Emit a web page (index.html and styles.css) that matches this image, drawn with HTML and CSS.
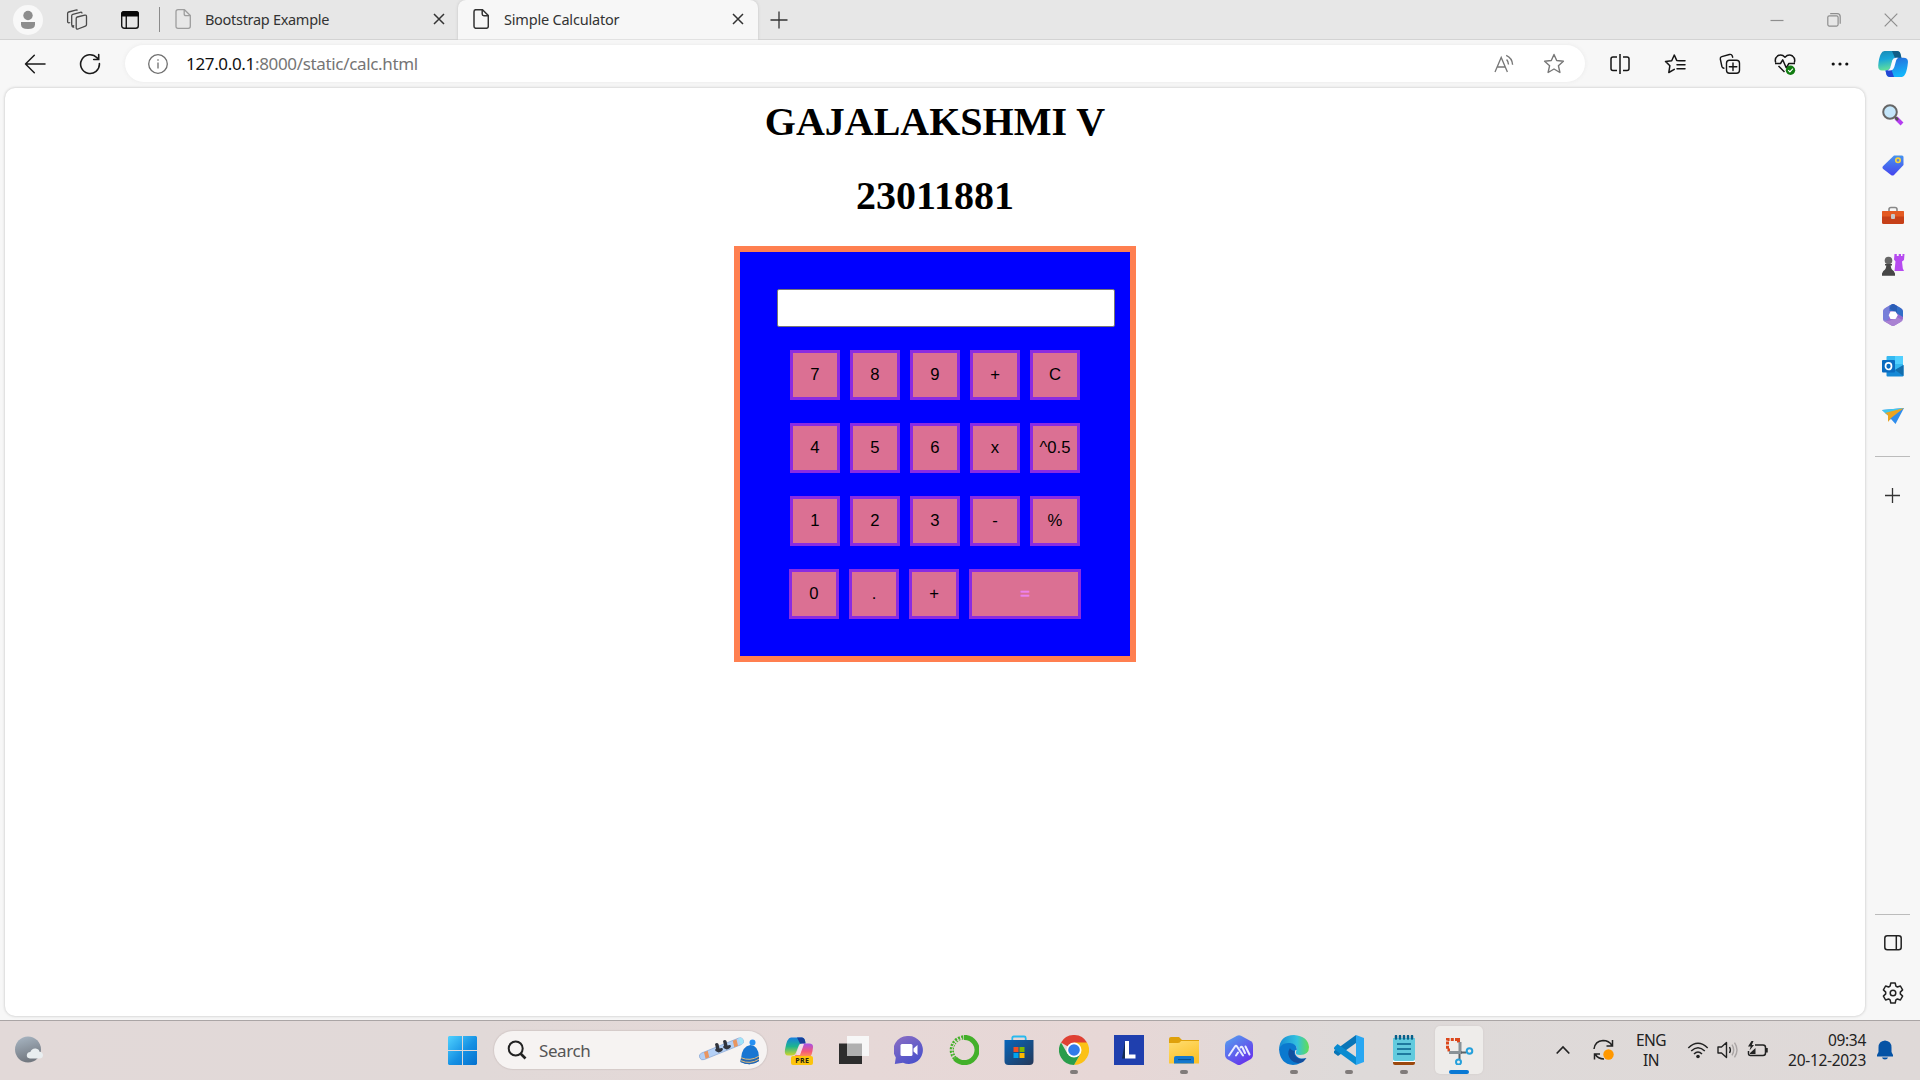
FILE: index.html
```html
<!DOCTYPE html>
<html lang="en">
<head>
<meta charset="utf-8">
<title>Simple Calculator</title>
<link rel="stylesheet" href="styles.css">
</head>
<body>
<header class="titlebar">
  <div class="profile"><svg width="30" height="30" viewBox="0 0 30 30"><circle cx="15" cy="15" r="15" fill="#f8f8f8"/><circle cx="15" cy="10.500" r="4.700" fill="#8d8d8d"/><path d="M8 17h14v2.500q0 4.500-7 4.500t-7-4.500z" fill="#8d8d8d"/></svg></div>
  <div class="workspaces"><svg width="22" height="22" viewBox="0 0 22 22" fill="none" stroke="#4a4a4a" stroke-width="1.300" stroke-linejoin="round"><path d="M10.200 9.500q0-1.200 1.100-1.500l7.500-1.900q1.700-.3 1.700 1.300v8.200q0 1.200-1.100 1.500l-7.400 2.900q-1.800.5-1.800-1.200z"/><path d="M8.200 16.500q-2.500.9-2.500-1V6.800q0-1.200 1.100-1.500l7.500-2q1.700-.4 1.700 1.100M4.200 13.500q-2.600.9-2.600-1V4.500q0-1.200 1.100-1.500l7-1.900q1.500-.3 1.800.5M5.800 17q.5 1.500 2.400.8"/></svg></div>
  <div class="tabactions"><svg width="18" height="18" viewBox="0 0 18 18"><rect x=".7" y=".7" width="16.600" height="16.600" rx="2.500" fill="none" stroke="#161616" stroke-width="1.400"/><path d="M0 5.600V3q0-3 3-3h12q3 0 3 3v2.600zM4.600 5h1.300v12.500H4.600z" fill="#080808"/></svg></div>
  <div class="strip-divider"></div>
  <div class="tab tab-idle">
    <svg width="16" height="20" viewBox="0 0 16 20" fill="none" stroke="#9d9d9d" stroke-width="1.300" stroke-linejoin="round"><path d="M3 .7h6.500L15.300 6.500V17.300q0 2-2 2H3q-2 0-2-2V2.700q0-2 2-2zM9.200.8V5q0 1.700 1.700 1.700h4.200"/></svg>
    <span class="tab-title">Bootstrap Example</span>
    <svg class="tab-close" width="12" height="12" viewBox="0 0 12 12" stroke="#333" stroke-width="1.500"><path d="M1 1l10 10M11 1L1 11"/></svg>
  </div>
  <div class="tab tab-active">
    <svg width="16" height="20" viewBox="0 0 16 20" fill="none" stroke="#333" stroke-width="1.500" stroke-linejoin="round"><path d="M3 .7h6.500L15.300 6.500V17.300q0 2-2 2H3q-2 0-2-2V2.700q0-2 2-2zM9.200.8V5q0 1.700 1.700 1.700h4.200"/></svg>
    <span class="tab-title title-active">Simple Calculator</span>
    <svg class="tab-close" width="12" height="12" viewBox="0 0 12 12" stroke="#333" stroke-width="1.500"><path d="M1 1l10 10M11 1L1 11"/></svg>
  </div>
  <svg class="newtab" width="18" height="18" viewBox="0 0 18 18" stroke="#333" stroke-width="1.300"><path d="M9 .5v17M.5 9h17"/></svg>
  <div class="winctl">
    <svg width="14" height="14" viewBox="0 0 14 14" stroke="#8e8e8e" stroke-width="1.200"><path d="M.5 7.500h13"/></svg>
    <svg width="14" height="14" viewBox="0 0 14 14" fill="none" stroke="#8e8e8e" stroke-width="1.200"><rect x=".8" y="2.800" width="10.300" height="10.300" rx="1.500"/><path d="M3.200.7h7q3 0 3 3v7"/></svg>
    <svg width="14" height="14" viewBox="0 0 14 14" stroke="#8e8e8e" stroke-width="1.200"><path d="M.7.7l12.600 12.600M13.300.7L.7 13.300"/></svg>
  </div>
</header>
<nav class="toolbar">
  <div class="nav-cell"><svg width="22" height="20" viewBox="0 0 22 20" fill="none" stroke="#1b1b1b" stroke-width="1.500" stroke-linecap="round" stroke-linejoin="round"><path d="M21 10H1.500M10.300 1.200L1.500 10l8.800 8.800"/></svg></div>
  <div class="nav-cell"><svg width="22" height="22" viewBox="0 0 22 22" fill="none" stroke="#1b1b1b" stroke-width="1.600" stroke-linecap="round"><path d="M20.400 10.500A9.400 9.400 0 1 1 18 4.800l1.500 1.600M19.700 1.500v5h-5"/></svg></div>
  <div class="address">
    <svg width="20" height="20" viewBox="0 0 20 20" fill="none" stroke="#6f6f6f" stroke-width="1.300"><circle cx="10" cy="10" r="9.300"/><path d="M10 8.500v6M10 5.200v1.600"/></svg>
    <span class="url"><span class="host">127.0.0.1</span>:8000/static/calc.html</span>
    <div class="pill-icons">
      <svg width="20" height="20" viewBox="0 0 20 20" fill="none" stroke="#777" stroke-width="1.300"><path d="M1 18L7.200 3.500 13.400 18M3.200 13h8"/><path d="M12.600 5.500q1.700 1.700 1.900 5M12.200 1.300q6 2.500 6.400 9.500" stroke-width="1.400"/></svg>
      <svg width="22" height="22" viewBox="0 0 22 22" fill="none" stroke="#777" stroke-width="1.400" stroke-linejoin="round"><path d="M11 1.500l2.700 6 6.700.7-5 4.500 1.500 6.800-5.900-3.500-5.900 3.500 1.500-6.800-5-4.500 6.700-.7z"/></svg>
    </div>
  </div>
  <div class="tools">
    <div><svg width="20" height="20" viewBox="0 0 20 20" fill="none" stroke="#151515" stroke-width="1.500"><path d="M7 3H3Q1 3 1 5v9.500q0 2 2 2h4M13 3h4q2 0 2 2v9.500q0 2-2 2h-4M10 0v20"/></svg></div>
    <div><svg width="22" height="20" viewBox="0 0 22 20" fill="none" stroke="#151515" stroke-width="1.500" stroke-linejoin="round" stroke-linecap="round"><path d="M15.500 6.800l-2.800-.4L10.300 1 7.700 6.700 1.500 7.400l4.400 4.300L4.800 18.500l5.500-3.100M14 6.800h7M13 10.700h8M13 14.700h8"/></svg></div>
    <div><svg width="22" height="22" viewBox="0 0 22 22" fill="none" stroke="#151515" stroke-width="1.400" stroke-linejoin="round" stroke-linecap="round"><rect x="7.500" y="7.300" width="13" height="13" rx="3"/><path d="M14 10v7.500M10.300 13.800h7.500M4.900 15.200q-1.600-.2-2-1.700L1.300 6Q1 4.200 2.800 3.700L10.400 1.500q2.200-.6 2.800 1.300l.5 1.500"/></svg></div>
    <div><svg width="22" height="22" viewBox="0 0 22 22" fill="none" stroke="#151515" stroke-width="1.500" stroke-linejoin="round"><path d="M1.700 9.500Q.3 5.500 3.500 3q4-2.500 7.500 1.200Q14.500.5 18.500 3q3.200 2.500 1.800 6.500M4.500 13l6 6M1 10.500h5.500l2.200-3.700 3.500 8 2.700-4.300H21"/><circle cx="16.500" cy="17.200" r="4.700" fill="#107c10" stroke="none"/><path d="M14.200 17.200l1.700 1.700 3-3.300" stroke="#fff" stroke-width="1.200"/></svg></div>
    <div><svg width="18" height="6" viewBox="0 0 18 6" fill="#111"><circle cx="2.200" cy="3" r="1.600"/><circle cx="9" cy="3" r="1.600"/><circle cx="15.800" cy="3" r="1.600"/></svg></div>
    <div class="copilot"><svg width="30" height="28" viewBox="0 0 30 28"><defs><linearGradient id="ca" x2=".2" y2="1"><stop stop-color="#198ab3"/><stop offset=".45" stop-color="#19a6d9"/><stop offset="1" stop-color="#62e09b"/></linearGradient><linearGradient id="cb" x2=".3" y2="1"><stop stop-color="#2764d8"/><stop offset="1" stop-color="#14b4fa"/></linearGradient></defs><path d="M6.500 1h12q3 0 3.800 3l1 4H18q-2.500 0-3.200 2.300L12.500 17q-1 3.500-4.500 3.500H4Q0 20.500.2 15.500.8 8 2.700 4.200 4.200 1 6.500 1z" fill="url(#ca)"/><path d="M14 1h5q3 0 3.600 3l.9 4H17z" fill="#125d86"/><path d="M24 27H12q-3 0-3.700-3l-.8-3.600q3.900.3 5-3.400l2.300-7Q15.500 7.800 18 7.800h7.500q5 0 4.400 5-.7 7.200-2.500 11Q26 27 24 27z" fill="url(#cb)"/><path d="M7.500 20.400q3.900.3 5-3.400l3.500 10h-4q-3 0-3.700-3z" fill="#2446d4"/><path d="M14.300 10.300q.8-2.500 3.500-2.500h2.700q-1.700.5-2.300 2.500L16.300 17q-1.200 3.500-4.500 3.500H9.500q2.400-.9 3-3.500z" fill="#f7f9ff"/></svg></div>
  </div>
</nav>
<div class="middle">
  <main class="page">
    <h1>GAJALAKSHMI V</h1>
    <h1>23011881</h1>
    <form class="calculator">
      <input class="display" type="text">
      <div class="keys"><button type="button">7</button><button type="button">8</button><button type="button">9</button><button type="button">+</button><button type="button">C</button></div>
      <div class="keys"><button type="button">4</button><button type="button">5</button><button type="button">6</button><button type="button">x</button><button type="button">^0.5</button></div>
      <div class="keys"><button type="button">1</button><button type="button">2</button><button type="button">3</button><button type="button">-</button><button type="button">%</button></div>
      <div class="keys"><button type="button">0</button><button type="button">.</button><button type="button">+</button><button type="button" class="equals">=</button></div>
    </form>
  </main>
  <aside class="sidebar">
    <div><svg width="22" height="22" viewBox="0 0 22 22"><path d="M14 14l6 6" stroke="#b43cf0" stroke-width="4"/><path d="M13 13l3 3" stroke="#555" stroke-width="2.500"/><circle cx="8" cy="8" r="6.800" fill="#c4e6fa" stroke="#666" stroke-width="2"/></svg></div>
    <div><svg width="22" height="22" viewBox="0 0 22 22"><defs><linearGradient id="tg" x2="0" y2="1"><stop stop-color="#4793ee"/><stop offset="1" stop-color="#4544ee"/></linearGradient></defs><path d="M12 1.500h8q1.500 0 1.500 1.500v8L12 21q-1.500 1-3 0L1.200 15q-1.500-1.500 0-3z" fill="url(#tg)"/><circle cx="16" cy="6.300" r="2.200" fill="#5a86dd" stroke="#f7d33d" stroke-width="1.700"/></svg></div>
    <div><svg width="24" height="18" viewBox="0 0 24 18"><path d="M8 6V3.500q0-2 2-2h4q2 0 2 2V6" fill="none" stroke="#888" stroke-width="1.600"/><rect x="1" y="5" width="22" height="13" rx="1.500" fill="#c64018"/><path d="M1 6q0-1 1-1h20q1 0 1 1v4.500H1z" fill="#e45a22"/><rect x="10" y="8" width="4" height="5" rx="1" fill="#c7c7c7"/></svg></div>
    <div><svg width="24" height="24" viewBox="0 0 24 24"><path d="M13.500 1h2.300v2h1.900V1h2.300v2h1.500V1h2l-.5 6-2 1.500.8 7 1.200 2.500H13.500l1-9.500-1.500-2z" fill="#b64af0"/><circle cx="7.500" cy="7.500" r="3.800" fill="#666"/><path d="M4 11h7v1.500H9.700q.2 4 3 5.500l1.300 2.500v2.300H1v-2.300L2.300 18q2.800-1.500 3-5.500H4z" fill="#464646"/></svg></div>
    <div><svg width="22" height="24" viewBox="0 0 22 24"><path d="M9 1.700q2-1.200 4 0l6 3.500q2 1.200 2 3.300v7q0 2.100-2 3.300l-6 3.500q-2 1.200-4 0l-6-3.500q-2-1.200-2-3.300v-7Q1 6.400 3 5.200z" fill="#956bd0"/><path d="M1 15.500v-7Q1 6.400 3 5.200L7.500 2.500v10q0 3-2 4.500l-2 1.800Q1 18 1 15.500z" fill="#777fd9"/><path d="M7.500 2.500L9 1.700q2-1.200 4 0l6 3.500q2 1.200 2 3.300v5.500L15 10.500 11 8H7.500z" fill="#326fc8"/><path d="M4 19.300L1.500 17q5 2 9-.5l4-2.500L20.500 17q-.5 1.200-1.500 1.800l-6 3.500q-2 1.200-4 0z" fill="#a982d2"/><path d="M10 1.200q1.500-.5 3 .5l2 1.200v7.300L7.500 5.500z" fill="#2450a8" opacity=".55"/><path d="M8.500 8.500h5l2.300 3.700-2.300 3.800h-5l-1.800-3.800z" fill="#fff"/></svg></div>
    <div><svg width="22" height="22" viewBox="0 0 22 22"><rect x="4.500" y="1" width="16.500" height="14" rx="1" fill="#35b9f1"/><path d="M13 1h8v8h-8z" fill="#50d0ff"/><path d="M4.500 11l8.500 4 8.500-5v10.500q0 1-1 1h-15q-1 0-1-1z" fill="#1689d6"/><path d="M13 15l8.500 6V10z" fill="#126dac"/><rect x="0" y="5" width="13" height="12.500" rx="1" fill="#0a6bc0"/><ellipse cx="6.500" cy="11.200" rx="3" ry="3.300" fill="none" stroke="#fff" stroke-width="1.700"/></svg></div>
    <div><svg width="22" height="20" viewBox="0 0 22 20"><path d="M0 4L22 2 13.500 18 9 13l-3 2V9.500z" fill="#2f8ded"/><path d="M0 4l22-2L6 9.500z" fill="#42c7ed"/><path d="M3 7L22 2 9 12l-3 4V9z" fill="#eca41f"/></svg></div>
    <hr class="side-rule">
    <div class="side-add"><svg width="15" height="15" viewBox="0 0 15 15" stroke="#333" stroke-width="1.300"><path d="M7.500 0v15M0 7.500h15"/></svg></div>
    <hr class="side-rule low-rule">
    <div class="side-split"><svg width="18" height="16" viewBox="0 0 18 16" fill="none" stroke="#222" stroke-width="1.500"><rect x=".8" y=".8" width="16.400" height="14" rx="2.500"/><path d="M12.300 1v14"/></svg></div>
    <div><svg width="22" height="22" viewBox="0 0 22 22" fill="none" stroke="#222" stroke-width="1.500" stroke-linejoin="round"><path d="M8.800 1h4.400l.7 3.100 1.500.9 3-1 2.200 3.900-2.300 2.200v1.800l2.300 2.200-2.200 3.900-3-1-1.500.9-.7 3.100H8.800l-.7-3.100-1.500-.9-3 1-2.200-3.900 2.300-2.200v-1.800L1.400 7.900 3.600 4l3 1 1.500-.9z"/><circle cx="11" cy="11" r="2.800"/></svg></div>
  </aside>
</div>
<footer class="taskbar">
  <svg class="weather" width="30" height="28" viewBox="0 0 30 28"><defs><linearGradient id="wg" x2=".3" y2="1"><stop stop-color="#aab8c5"/><stop offset="1" stop-color="#737981"/></linearGradient></defs><circle cx="13" cy="13.500" r="13" fill="url(#wg)"/><path d="M15 22.500q-3.500-.5-3.200-3.500.5-3 3.500-3 1.500-4 5.500-3.500 3.200.5 3.700 3.300 3.200.2 3.500 3.200 0 3-3 3.500z" fill="#e9eef0"/></svg>
  <svg class="start" width="29" height="29" viewBox="0 0 29 29"><defs><linearGradient id="sg" x2="1" y2="1"><stop stop-color="#50d2ff"/><stop offset=".55" stop-color="#1590e3"/><stop offset="1" stop-color="#0470ce"/></linearGradient></defs><path d="M1 0h13v14H0V1zM15 0h13l1 1v13H15zM0 15h14v14H1l-1-1zM15 15h14v13l-1 1H15z" fill="url(#sg)"/></svg>
  <div class="search">
    <svg width="20" height="20" viewBox="0 0 20 20" fill="none" stroke="#222" stroke-width="2"><circle cx="8.700" cy="8.500" r="7"/><path d="M13.500 13.500l5 5" stroke-width="2.600"/></svg>
    <span class="search-label">Search</span>
    <svg class="doodle" width="62" height="34" viewBox="0 0 62 34"><g transform="rotate(-22 22 16)"><rect x="-1" y="12.500" width="47" height="7" rx="3.500" fill="#b4d0f6" stroke="#8ba9d6" stroke-width=".7"/><path d="M42 12.500q4 0 4 3.500t-4 3.500z" fill="#9fe4f8"/><path d="M5 12.700h4l-1 6.600H4zM36 12.700h4l-1 6.600h-4z" fill="#e99560"/></g><path d="M16 11q2-2 3.500 0l1 4.500q3-1 3.500.5-.5 2.500-4.500 3.500l-3-1.500q-1-1.200.5-2.500zM24 8q2-2 3.500 0l1 4.500q3-1 3.500.5-.5 2.500-4.500 3.500l-3-1.500q-1-1.200.5-2.500z" fill="#30343d"/><circle cx="53.500" cy="9.500" r="3" fill="#2790f3"/><path d="M42 25.500Q43 13 51.500 12q8 .5 8.500 12v4q-8 6-18.500 1z" fill="#1976d2"/><path d="M42 24.500q8 4.500 18-1.500v5q-8 6-18.500 1z" fill="#2567b2"/><path d="M42 24.700q9 4 18-1.500M42 27.700q9 4 18-1.500" fill="none" stroke="#e3bd78" stroke-width="1"/></svg>
  </div>
  <div class="apps">
    <div class="app"><svg width="30" height="30" viewBox="0 0 30 30"><defs><linearGradient id="p1" x2="0" y2="1"><stop stop-color="#177ee0"/><stop offset=".5" stop-color="#1eb58e"/><stop offset="1" stop-color="#d0d52b"/></linearGradient><linearGradient id="p2" x2="0" y2="1"><stop stop-color="#a552e8"/><stop offset=".6" stop-color="#f3577a"/><stop offset="1" stop-color="#ff9256"/></linearGradient></defs><path d="M7 2.500h11q3 0 3.500 6H18q-3 0-4 4l-2 5q-1 3-4 3H4q-4 0-3-6Q3 2.500 7 2.500z" fill="url(#p1)"/><path d="M13 2.500h5q3 0 3.500 6H16z" fill="#173f9a"/><path d="M18 8.500h7q4.500 0 4 4-1 8.500-3 9H10l4-4 2-7z" fill="url(#p2)"/><path d="M16 9h4l-4 11h-4z" fill="#f4dce8"/><rect x="7" y="21" width="22" height="9" rx="2" fill="#fcc40c"/><text x="18.200" y="28.200" text-anchor="middle" class="pre">PRE</text></svg></div>
    <div class="app"><svg width="30" height="30" viewBox="0 0 30 30"><path d="M0 8.500h23V29H0z" fill="#2d2d2d"/><path d="M8 1h22v20H8z" fill="#f7f7f7"/><path d="M8 8.500h15V21H8z" fill="#b0b0b0"/></svg></div>
    <div class="app"><svg width="30" height="30" viewBox="0 0 30 30"><defs><linearGradient id="tc" x2=".6" y2="1"><stop stop-color="#8d6fc3"/><stop offset="1" stop-color="#4d52cb"/></linearGradient></defs><path d="M15 1a14 14 0 1 1-6 26.700L.8 29l1-6.500A14 14 0 0 1 15 1z" fill="url(#tc)"/><rect x="6.500" y="9" width="12" height="12" rx="1.500" fill="#fff"/><path d="M19.500 13.500l4-3.500v10l-4-3.500z" fill="#fff"/></svg></div>
    <div class="app"><svg width="30" height="30" viewBox="0 0 30 30" fill="none" stroke="#43b02a"><path d="M15 2.400a12.600 12.600 0 1 1-9 21" stroke-width="5"/><path d="M6 23.400A12.600 12.600 0 0 1 15 2.400" stroke-width="4.200" stroke-dasharray="2 1.200"/><path d="M5 22.400A12.600 12.600 0 0 1 14 3.400" stroke-width="1" stroke="#e6d8d7" stroke-dasharray="2.500 1"/></svg></div>
    <div class="app"><svg width="30" height="30" viewBox="0 0 30 30"><defs><linearGradient id="ms" x2="1" y2="1"><stop stop-color="#0766bb"/><stop offset="1" stop-color="#253858"/></linearGradient></defs><path d="M8.300 7V3q0-1.500 1.500-1.500h10.400q1.500 0 1.500 1.500v4" fill="none" stroke="#28b9ee" stroke-width="1.800"/><path d="M.5 5h29v21q0 4-4 4h-21q-4 0-4-4z" fill="url(#ms)"/><path d="M9.500 12h5v5h-5z" fill="#f25022"/><path d="M15.500 12h5v5h-5z" fill="#7fba00"/><path d="M9.500 18h5v5h-5z" fill="#00a4ef"/><path d="M15.500 18h5v5h-5z" fill="#ffb900"/></svg></div>
    <div class="app running"><svg width="30" height="30" viewBox="0 0 30 30"><path d="M15 15L2 7.500A15 15 0 0 1 28 7.500z" fill="#df4033"/><path d="M15 15V7.500h13A15 15 0 0 1 15 30l6.500-11.200z" fill="#fbc116"/><path d="M2 7.500A15 15 0 0 0 15 30l6.500-11.200L15 22 8.500 18.700z" fill="#299d4b"/><circle cx="15" cy="15" r="7.500" fill="#fff"/><circle cx="15" cy="15" r="5.800" fill="#317be9"/></svg></div>
    <div class="app"><svg width="30" height="30" viewBox="0 0 30 30"><path d="M0 0h30v30H0z" fill="#1f3fae"/><path d="M11 6.500L8 23.500h3z" fill="#132b51"/><path d="M11 6h4v13.500h6.500v4H11z" fill="#fff"/></svg></div>
    <div class="app running"><svg width="30" height="30" viewBox="0 0 30 30"><defs><linearGradient id="fg" x2=".5" y2="1"><stop stop-color="#ffdd70"/><stop offset="1" stop-color="#fbc22c"/></linearGradient></defs><path d="M0 4q0-2 2-2h8l3 3h17v8H0z" fill="#dfa10b"/><path d="M0 8h9q2 0 3-2h18v22.500H0z" fill="url(#fg)"/><path d="M5 28.500V23q0-2 2-2h16q2 0 2 2v5.500z" fill="#1478cd"/><path d="M9 24.600h13" stroke="#064f8c" stroke-width="1"/></svg></div>
    <div class="app"><svg width="30" height="30" viewBox="0 0 30 30"><defs><linearGradient id="ag" x2=".7" y2="1"><stop stop-color="#54a5ee"/><stop offset="1" stop-color="#6632ec"/></linearGradient></defs><path d="M13 .7q2-1 4 0l10 5.500q2 1.200 2 3.800v10q0 2.800-2 4l-10 5.500q-2 1-4 0L3 24q-2-1.200-2-4V10q0-2.600 2-3.800z" fill="url(#ag)"/><path d="M5 20.500l6-9q1-1.500 2 0l6 9M16.500 12.500q1-1.500 2 0L21 18M12 20.500l2-3M21.500 11.500l4 8" fill="none" stroke="#e9ecff" stroke-width="2" stroke-linecap="round"/></svg></div>
    <div class="app running"><svg width="30" height="30" viewBox="0 0 30 30"><defs><linearGradient id="eg" x2="1"><stop stop-color="#168bd4"/><stop offset=".6" stop-color="#33c2df"/><stop offset="1" stop-color="#62dd53"/></linearGradient></defs><path d="M0 14Q1 0 15 0q14 1 15 12 0 8-9 8-5 0-4-3 3-6-4-8Q4 9 0 14z" fill="url(#eg)"/><path d="M0 14q3-7 11-6 7 1 7 7-1-1-2 1-1 4 4 7 3 1 7 0Q22 30 14 30 1 29 0 14z" fill="#0b79cf"/><path d="M11 13q-4 6 1 12 5 5 12 2 2-2 3.500-4-5 2-9 0-4-3-3-7-4-1-4.500-3z" fill="#124f9f"/></svg></div>
    <div class="app running"><svg width="30" height="30" viewBox="0 0 30 30"><path d="M22 0l8 3v24l-8 3z" fill="#28a7f2"/><path d="M22 0v8L4 21l-4-3q-.5-1 0-2z" fill="#0875b7"/><path d="M0 12.500L3.500 9 22 22v8L0 14z" fill="#098bd0"/></svg></div>
    <div class="app running"><svg width="30" height="30" viewBox="0 0 30 30"><path d="M4 27h22v1q0 2-2 2H6q-2 0-2-2z" fill="#9b480d"/><path d="M4 25h22v2H4z" fill="#fff"/><path d="M4 3h22v21q0 2-2 2H6q-2 0-2-2z" fill="#62cbde"/><path d="M7 1v2.500M11 1v2.500M15 1v2.500M19 1v2.500M23 1v2.500" stroke="#08608a" stroke-width="2.500" stroke-linecap="round"/><path d="M8 9h14M8 14h14M8 19h14" stroke="#08608a" stroke-width="1.600"/></svg></div>
    <div class="app current"><svg width="30" height="30" viewBox="0 0 30 30"><path d="M14 4.500H3.500V15H6" fill="none" stroke="#db471b" stroke-width="3" stroke-dasharray="3 1.200"/><path d="M13.500 4.500h1v3" fill="none" stroke="#db471b" stroke-width="3"/><path d="M5 17.500h13M16 7v12" stroke="#8a9297" stroke-width="3" fill="none"/><path d="M17 17.500h5M15.500 19v5" stroke="#5c6367" stroke-width="2"/><circle cx="25.500" cy="16" r="2.800" fill="none" stroke="#25a0db" stroke-width="2"/><circle cx="14.500" cy="27" r="2.500" fill="none" stroke="#25a0db" stroke-width="2"/></svg></div>
  </div>
  <div class="tray">
    <svg class="chev" width="14" height="10" viewBox="0 0 14 10" fill="none" stroke="#222" stroke-width="1.700"><path d="M.7 8.500L7 2l6.300 6.500"/></svg>
    <svg class="sync" width="22" height="22" viewBox="0 0 22 22" fill="none" stroke="#222" stroke-width="1.500"><path d="M1 10Q2 2 10 1.500q6 0 9 5M19.500 1v6h-6M1.500 20.500v-5.500h5.500M2 15q3 5 9 5"/><circle cx="15.500" cy="15.500" r="5.200" fill="#ff9800" stroke="none"/></svg>
    <div class="lang"><span>ENG</span><span>IN</span></div>
    <svg class="wifi" width="22" height="18" viewBox="0 0 22 18" fill="none" stroke="#222" stroke-width="1.500"><path d="M1.300 7q9.700-9.500 19.400 0M4.200 10q6.800-6.500 13.600 0M7 13q4-4 8 0"/><circle cx="11" cy="15.500" r="1.800" fill="#222" stroke="none"/></svg>
    <svg class="volume" width="22" height="18" viewBox="0 0 22 18" fill="none" stroke="#222" stroke-width="1.400" stroke-linejoin="round"><path d="M1 6h3.500L9.500 1.500v15L4.500 12H1z"/><path d="M12.500 6q1.800 3 0 6"/><path d="M15 3.700q3.400 5.300 0 10.600M17.500 1.700q5 7.300 0 14.600" stroke="#aaa5a5"/></svg>
    <svg class="battery" width="22" height="18" viewBox="0 0 22 18" fill="none" stroke="#222" stroke-width="1.500"><path d="M8 4h8q2.500 0 2.500 2.500V12q0 2.500-2.500 2.500H3.500Q1.500 14.500 1.500 12.500V10M20 7v4.500"/><path d="M4.500 0L1 5.500h2.700L2.500 9.500 7 4H4.800L6.500 0zM3 13V12l5.500-5v6z" fill="#222" stroke="none"/></svg>
    <div class="clock"><span class="time">09:34</span><span>20-12-2023</span></div>
    <svg class="bell" width="16" height="20" viewBox="0 0 16 20" fill="#0553a5"><path d="M8 .5q6.500.5 6.500 7V12l1.500 3v1.500H0V15l1.500-3V7.500Q1.500 1 8 .5zM5 17.500h6q-.5 2-3 2t-3-2z"/></svg>
  </div>
</footer>
</body>
</html>
```
FILE: styles.css
```css
* { box-sizing: border-box; }
body { margin: 0; width: 1920px; height: 1080px; overflow: hidden; display: grid; grid-template-rows: 40px 48px 932px 60px; background: #f7f7f7; font-family: "Noto Sans", "Open Sans", sans-serif; color: #333; }
svg { display: block; flex: none; }

.titlebar { display: flex; align-items: center; background: #e7e7e7; border-bottom: 1px solid #d3d3d3; }
.profile { margin-left: 13px; }
.workspaces { margin-left: 23px; }
.tabactions { margin-left: 33px; }
.strip-divider { width: 1px; height: 25px; margin-left: 20px; background: #8b8b8b; }
.tab { display: flex; align-items: center; height: 40px; font-size: 14.500px; padding-bottom: 1px; }
.tab-idle { width: 298px; padding-left: 15px; }
.tab-active { width: 300px; padding-left: 15px; background: #f7f7f7; border-radius: 8px 8px 0 0; box-shadow: 0 0 3px #c2c2c2; clip-path: inset(0 -4px 0 -4px); }
.tab-title { margin: 0 0 1px 14px; letter-spacing: -.3px; white-space: nowrap; }
.title-active { margin-left: 15px; letter-spacing: -.2px; }
.tab-close { margin-left: auto; margin-right: 13px; }
.tab-active .tab-close { margin-right: 14px; }
.newtab { margin-left: 12px; }
.winctl { margin-left: auto; margin-right: 22px; display: flex; gap: 43px; }

.toolbar { display: flex; align-items: center; padding: 0 0 1px 7px; }
.nav-cell { width: 55px; display: flex; justify-content: center; }
.address { width: 1460px; height: 37px; margin-left: 8px; padding: 0 20px 0 23px; border-radius: 19px; background: #fff; box-shadow: 0 0 4px #e9e9e9; display: flex; align-items: center; }
.url { margin-left: 18px; font-size: 17px; letter-spacing: -.34px; color: #757575; white-space: nowrap; }
.host { color: #111; }
.pill-icons { margin-left: auto; display: flex; align-items: center; gap: 29px; }
.tools { display: flex; margin-left: 7px; }
.tools > div { width: 55px; height: 28px; display: flex; align-items: center; justify-content: center; }
.tools > .copilot { width: 51px; }

.middle { display: grid; grid-template-columns: 1860px 55px; padding-left: 5px; }
.page { height: 928px; background: #fff; border-radius: 10px; box-shadow: 0 0 3px #bcbcbc; display: flex; flex-direction: column; align-items: center; padding-top: 11px; }
h1 { margin: 0 0 28px; font: bold 40px/46px "Liberation Serif", serif; color: #000; }
.calculator { width: 402px; height: 416px; margin: -1px 0 0; background: #00f; border: 6px solid coral; display: flex; flex-direction: column; align-items: center; padding-top: 37px; }
.display { width: 338px; height: 38px; margin: 0 0 23px 22px; border: 1px solid #767676; border-radius: 2px; background: #fff; padding: 0; }
.keys { display: flex; gap: 10px; margin-bottom: 23px; }
.keys button { width: 50px; height: 50px; padding: 0 0 1px; border: 3px solid blueviolet; background: palevioletred; color: #000; font: 16.667px "Liberation Sans", sans-serif; display: flex; align-items: center; justify-content: center; white-space: nowrap; }
.keys .equals { width: 112px; color: violet; -webkit-text-stroke: .4px violet; }

.sidebar { display: flex; flex-direction: column; align-items: center; padding: 2px 0 0; height: 932px; }
.sidebar > div { height: 50.100px; display: flex; align-items: center; justify-content: center; flex: none; }
.side-rule { width: 35px; height: 1px; margin: 15px 0 0; border: 0; background: #bcbcbc; flex: none; }
.sidebar .side-add { height: 78px; }
.sidebar .low-rule { margin-top: auto; margin-bottom: 3px; }
.sidebar > div:last-child { margin-bottom: 2px; }

.taskbar { display: flex; align-items: center; border-top: 1px solid #aaa5a5; background: linear-gradient(90deg, #e2d9d8, #e1d9d8 25%, #e6d8d7 45%, #e7d7d6 58%, #dedad9 70%, #dfd9d8); padding-bottom: 1px; }
.weather { margin-left: 15px; }
.start { margin-left: 403px; }
.search { width: 273px; height: 38px; margin-left: 17px; padding: 0 6px 0 13px; border-radius: 19px; background: #f6f3f2; box-shadow: 0 0 1px 1px #d4cac9; display: flex; align-items: center; }
.search-label { margin-left: 12px; font-size: 17px; letter-spacing: -.4px; color: #555; }
.doodle { margin-left: auto; }
.apps { display: flex; margin-left: 4px; }
.app { width: 55px; height: 48px; display: flex; flex-direction: column; align-items: center; padding-top: 9px; }
.running::after { content: ""; width: 8px; height: 4px; margin-top: 5px; border-radius: 2px; background: #807b7a; }
.current { width: 48px; margin-left: 4px; background: #eeecea; border-radius: 5px; box-shadow: 0 0 2px #cfc8c7; }
.current::after { content: ""; width: 20px; height: 4px; margin-top: 5px; border-radius: 2px; background: #0878d4; }
.pre { font: bold 7px "Open Sans", sans-serif; fill: #221; letter-spacing: .3px; }
.tray { display: flex; align-items: center; margin-left: auto; margin-right: 27px; font-size: 15.500px; line-height: 20px; color: #222; }
.chev { margin-right: 23px; }
.sync { margin-right: 21px; }
.lang { width: 30px; display: flex; flex-direction: column; align-items: center; letter-spacing: -.6px; margin: 0 21px 0 0; }
.wifi { margin-right: 8px; }
.volume { margin-right: 8px; }
.clock { width: 97px; display: flex; flex-direction: column; align-items: flex-end; letter-spacing: -.3px; white-space: nowrap; }
.bell { margin-left: 11px; }
```
